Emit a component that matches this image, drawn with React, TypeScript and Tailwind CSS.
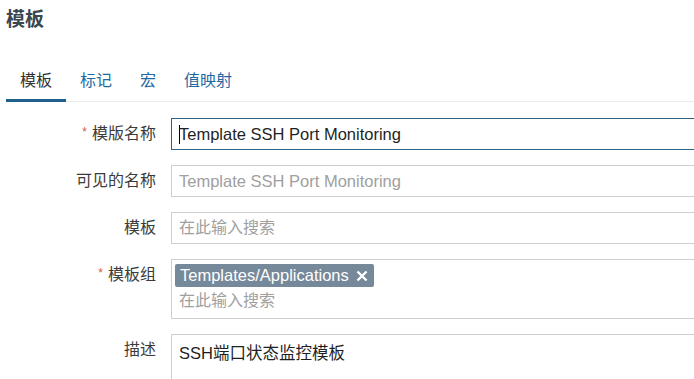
const tabs = ['模板', '标记', '宏', '值映射'];

const Label = ({ text, required }: { text: string; required?: boolean }) => (
  <div className="w-[156px] shrink-0 text-right text-[16px] leading-[32px] text-[#3b3b3b]">
    {required && <span className="mr-[5px] align-top text-[12px] leading-[28px] text-[#d9534f]">*</span>}
    {text}
  </div>
);

export default function App() {
  return (
    <div
      className="h-[379px] w-[694px] overflow-hidden bg-white"
      style={{ fontFamily: '"Liberation Sans", Arial, "Noto Sans CJK SC", sans-serif' }}
    >
      <h1 className="pl-[6px] pt-[6px] text-[19px] font-bold leading-[28px] text-[#3a4650]">模板</h1>

      <div className="ml-[6px] mt-[28px] flex border-b border-[#ebebeb]">
        {tabs.map((t, i) => (
          <div
            key={t}
            className={
              i === 0
                ? '-mb-px border-b-[3px] border-[#1f5f8b] px-[14px] text-[16px] leading-[37px] text-[#333]'
                : '-mb-px border-b-[3px] border-transparent px-[14px] text-[16px] leading-[37px] text-[#1f6aa5]'
            }
          >
            {t}
          </div>
        ))}
      </div>

      <div className="mt-[16px] flex flex-col gap-[15px]">
        <div className="flex gap-[15px]">
          <Label text="模版名称" required />
          <div className="flex h-[32px] w-[540px] shrink-0 items-center border border-[#2f6385] pl-[7px] text-[16.5px] text-[#1f1f1f]">
            <span className="mr-[-1px] h-[19px] w-px bg-black" />
            Template SSH Port Monitoring
          </div>
        </div>

        <div className="flex gap-[15px]">
          <Label text="可见的名称" />
          <div className="flex h-[32px] w-[540px] shrink-0 items-center border border-[#cfcfcf] pl-[7px] text-[16.5px] text-[#a0a0a0]">
            Template SSH Port Monitoring
          </div>
        </div>

        <div className="flex gap-[15px]">
          <Label text="模板" />
          <div className="flex h-[32px] w-[540px] shrink-0 items-center border border-[#cfcfcf] pl-[7px] text-[16px] text-[#a0a0a0]">
            在此输入搜索
          </div>
        </div>

        <div className="flex gap-[15px]">
          <Label text="模板组" required />
          <div className="h-[60px] w-[540px] shrink-0 border border-[#cfcfcf] pl-[3px] pt-[4px]">
            <span className="inline-flex h-[23px] items-center gap-[7px] rounded-[2px] bg-[#76899a] pl-[5px] pr-[6px] text-[16.5px] text-white">
              Templates/Applications
              <svg width="12" height="12" viewBox="0 0 12 12" className="mt-px">
                <path d="M1.5 1.5 L10.5 10.5 M10.5 1.5 L1.5 10.5" stroke="white" strokeWidth="2.4" />
              </svg>
            </span>
            <div className="pl-[4px] text-[16px] leading-[26px] text-[#a0a0a0]">在此输入搜索</div>
          </div>
        </div>

        <div className="flex gap-[15px]">
          <Label text="描述" />
          <div className="h-[70px] w-[540px] shrink-0 border border-[#cfcfcf] pl-[7px] pt-[8px] text-[16.5px] leading-[20px] text-[#1f1f1f]">
            SSH端口状态监控模板
          </div>
        </div>
      </div>
    </div>
  );
}
